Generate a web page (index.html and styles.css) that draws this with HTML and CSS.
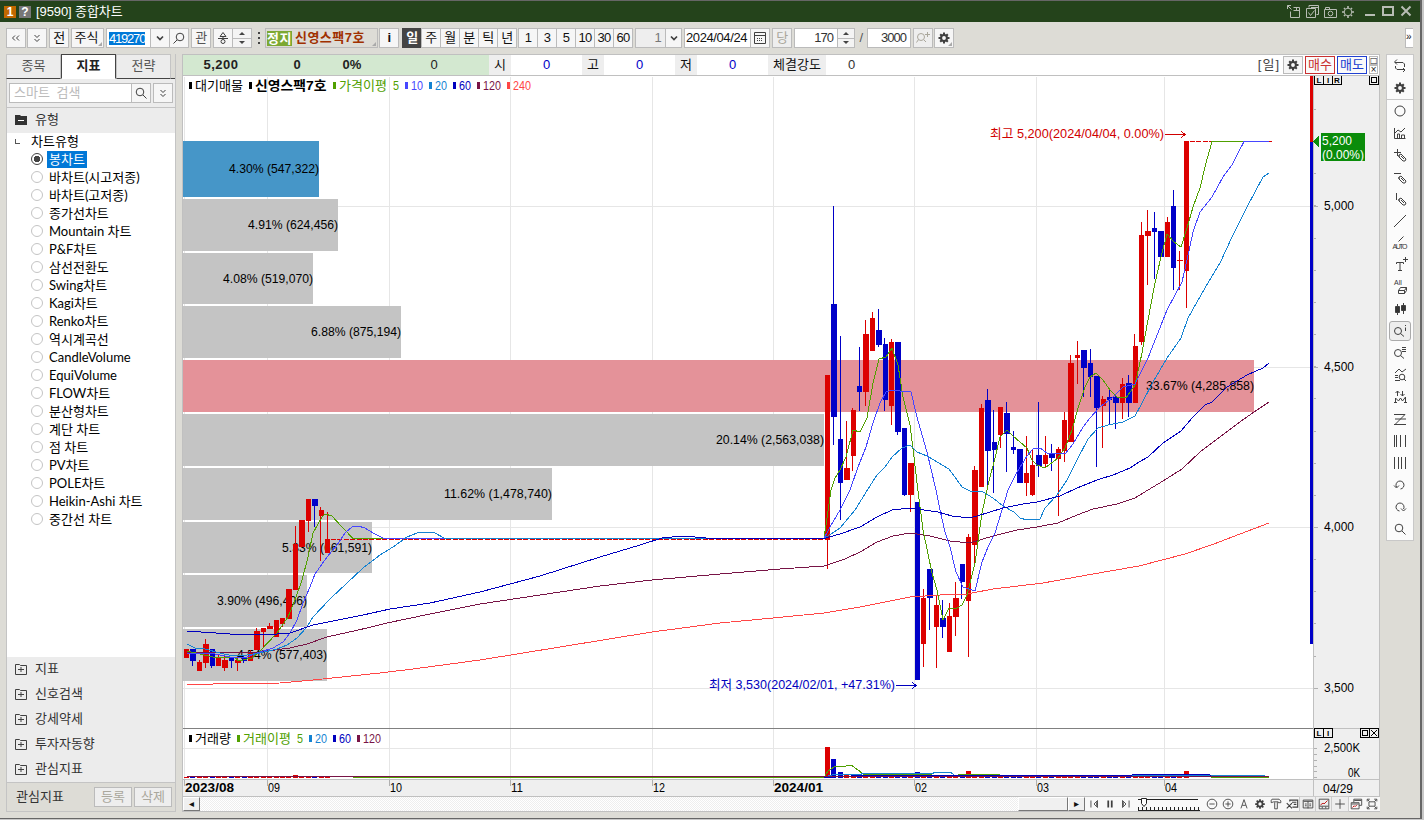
FILE: index.html
```html
<!DOCTYPE html>
<html lang="ko">
<head>
  <meta charset="utf-8">
  <title>[9590] 종합차트</title>
  <link rel="stylesheet" href="styles.css">
</head>
<body>

<!-- shared icons -->
<svg class="defs" width="0" height="0">
  <symbol id="gear" viewBox="0 0 16 16">
    <path d="M8 2.500v11M2.500 8h11M4.200 4.200l7.600 7.600M11.800 4.200l-7.600 7.600" stroke="currentColor" stroke-width="2"/>
    <circle cx="8" cy="8" r="2.900" fill="#f8f8f8" stroke="currentColor" stroke-width="2"/>
  </symbol>
  <symbol id="glass" viewBox="0 0 16 16">
    <circle cx="7" cy="7" r="3.800"/><path d="M10 10l3.500 3.500"/>
  </symbol>
  <symbol id="pencil" viewBox="0 0 16 16">
    <path d="M7 8l2-1 5 5-1 2-2 0-4-4zM7 8l0 2M9 9l3 3"/>
  </symbol>
  <symbol id="down" viewBox="0 0 16 16"><path d="M5 6.500l3 3 3-3" stroke-width="1.700"/></symbol>
  <symbol id="chevs" viewBox="0 0 16 16"><path d="M5.500 5l2.500 2.500 2.500-2.500M5.500 9l2.500 2.500 2.500-2.500"/></symbol>
  <symbol id="plusbox" viewBox="0 0 16 16">
    <path d="M2.500 3.500h4l1 1h6v9h-11zM5 8.500h6M8 6v5"/>
  </symbol>
</svg>

<div class="window">
  <div class="titlebar">
    <span class="badge num">1</span>
    <span class="badge help">?</span>
    <span class="caption">[9590] 종합차트</span>
    <div class="winbtns">
      <svg class="ic" viewBox="0 0 16 16"><path d="M1.500 5v-3.500h3.500M1.500 1.500l4 4M4.500 7.500v6h9v-10h-6M7.500 6.500h6M10.500 4v2"/></svg>
      <svg class="ic" viewBox="0 0 16 16"><path d="M5 3.500v-2h9.500v9h-2M2.500 4.500h9v9h-9zM4.500 8.500l2 3 4-5M7 3.500h7" /></svg>
      <svg class="ic" viewBox="0 0 16 16"><path d="M2.500 5.500h12v8h-12zM3.500 5.500v-2h4v2"/><circle cx="8.500" cy="9.500" r="2.300"/></svg>
      <svg class="ic" viewBox="0 0 16 16"><circle cx="8" cy="8" r="3.800"/><path d="M8 2v2M8 12v2M2 8h2M12 8h2M4 4l1 1M11 11l1 1M12 4l-1 1M4 12l1-1" stroke-width="1.600"/></svg>
      <svg class="ic wide" viewBox="0 0 16 16"><path d="M3 11h10" stroke-width="2"/></svg>
      <svg class="ic" viewBox="0 0 16 16"><path d="M3 3h10v8h-10z" stroke-width="2"/></svg>
      <svg class="ic" viewBox="0 0 16 16"><path d="M3.500 2.500l9 9M12.500 2.500l-9 9" stroke-width="2"/></svg>
    </div>
  </div>

  <div class="toolbar">
    <div class="btn w20"><svg class="ic turn"><use href="#chevs"/></svg></div>
    <div class="btn w20 g1"><svg class="ic"><use href="#chevs"/></svg></div>
    <div class="btn w20 g2">전</div>
    <div class="btn corner w33 g2">주식</div>
    <div class="field code g2"><span class="sel">419270</span></div>
    <div class="btn w20 join"><svg class="ic"><use href="#down"/></svg></div>
    <div class="btn w20 join"><svg class="ic flip"><use href="#glass"/></svg></div>
    <div class="btn w20 g2 soft">관</div>
    <div class="btn w20 g2 soft"><svg class="ic" viewBox="0 0 16 16"><path d="M8 2.500l-3 4h6zM3 8.500h10M8 6v2"/><circle cx="8" cy="11.500" r="2"/></svg></div>
    <div class="spin w19"><i class="up"></i><i class="dn"></i></div>
    <div class="dots"><i></i><i></i><i></i></div>
    <div class="btn corner stock"><span class="halt">정지</span><b>신영스팩7호</b></div>
    <div class="btn w20 g1"><b>i</b></div>
    <div class="btn w20 g3 on">일</div>
    <div class="btn w20 join">주</div>
    <div class="btn w20 join">월</div>
    <div class="btn w20 join">분</div>
    <div class="btn w20 join">틱</div>
    <div class="btn w20 join">년</div>
    <div class="btn w20 g1">1</div>
    <div class="btn w20 join">3</div>
    <div class="btn w20 join">5</div>
    <div class="btn w20 join">10</div>
    <div class="btn w20 join">30</div>
    <div class="btn w20 join">60</div>
    <div class="field off g2">1</div>
    <div class="btn w17 join"><svg class="ic"><use href="#down"/></svg></div>
    <div class="field date g2">2024/04/24</div>
    <div class="btn w20 join"><svg class="ic" viewBox="0 0 16 16"><path d="M2.500 2.500h11v11h-11zM3 5.500h10"/><path d="M5 8.500h6M5 10.500h6" stroke-dasharray="1 1"/></svg></div>
    <div class="btn w20 g2 dim">당</div>
    <div class="field count g2">170</div>
    <div class="spin w17"><i class="up"></i><i class="dn"></i></div>
    <div class="slash">/</div>
    <div class="field count">3000</div>
    <div class="btn w20 g2 dim"><svg class="ic" viewBox="0 0 16 16"><circle cx="6" cy="7" r="3.500"/><path d="M3.500 9.500l-2 3M10 4.500h5M12.500 2v5M9 10l2 2"/></svg></div>
    <div class="btn corner w20 g1"><svg class="ic"><use href="#gear"/></svg></div>
    <div class="more">»</div>
  </div>

  <div class="main">
    <div class="sidebar">
      <div class="tabs">
        <div class="tab">종목</div>
        <div class="tab active">지표</div>
        <div class="tab">전략</div>
        <div class="rest"></div>
      </div>
      <div class="search">
        <div class="query">스마트 검색</div>
        <div class="btn w20 join"><svg class="ic"><use href="#glass"/></svg></div>
        <div class="btn w20 g2"><svg class="ic"><use href="#chevs"/></svg></div>
      </div>
      <div class="group head">
        <svg class="ic" viewBox="0 0 16 16"><path d="M2 3h5l1 1h6v9h-12z" fill="#333" stroke="none"/><path d="M5 8.500h6" stroke="#fff"/></svg>
        유형
      </div>
      <div class="tree">
        <div class="root"><i></i>차트유형</div>
        <div class="item checked"><i></i><span>봉차트</span></div>
        <div class="item"><i></i><span>바차트(시고저종)</span></div>
        <div class="item"><i></i><span>바차트(고저종)</span></div>
        <div class="item"><i></i><span>종가선차트</span></div>
        <div class="item"><i></i><span>Mountain 차트</span></div>
        <div class="item"><i></i><span>P&amp;F차트</span></div>
        <div class="item"><i></i><span>삼선전환도</span></div>
        <div class="item"><i></i><span>Swing차트</span></div>
        <div class="item"><i></i><span>Kagi차트</span></div>
        <div class="item"><i></i><span>Renko차트</span></div>
        <div class="item"><i></i><span>역시계곡선</span></div>
        <div class="item"><i></i><span>CandleVolume</span></div>
        <div class="item"><i></i><span>EquiVolume</span></div>
        <div class="item"><i></i><span>FLOW차트</span></div>
        <div class="item"><i></i><span>분산형차트</span></div>
        <div class="item"><i></i><span>계단 차트</span></div>
        <div class="item"><i></i><span>점 차트</span></div>
        <div class="item"><i></i><span>PV차트</span></div>
        <div class="item"><i></i><span>POLE차트</span></div>
        <div class="item"><i></i><span>Heikin-Ashi 차트</span></div>
        <div class="item"><i></i><span>중간선 차트</span></div>
      </div>
      <div class="group"><svg class="ic"><use href="#plusbox"/></svg>지표</div>
      <div class="group"><svg class="ic"><use href="#plusbox"/></svg>신호검색</div>
      <div class="group"><svg class="ic"><use href="#plusbox"/></svg>강세약세</div>
      <div class="group"><svg class="ic"><use href="#plusbox"/></svg>투자자동향</div>
      <div class="group"><svg class="ic"><use href="#plusbox"/></svg>관심지표</div>
      <div class="foot">
        <span>관심지표</span>
        <div class="btn dim">등록</div>
        <div class="btn dim">삭제</div>
      </div>
    </div>

    <div class="chart">
      <div class="quote">
        <div class="now"><b>5,200</b><b>0</b><b>0%</b><span>0</span></div>
        <div class="lab">시</div><div class="val">0</div>
        <div class="lab">고</div><div class="val">0</div>
        <div class="lab">저</div><div class="val">0</div>
        <div class="lab power">체결강도</div><div class="val last">0</div>
        <div class="right">
          <span class="period">[일]</span>
          <div class="btn w20"><svg class="ic"><use href="#gear"/></svg></div>
          <div class="trade buy">매수</div>
          <div class="trade sell">매도</div>
          <div class="mini"><i>□</i><i>×</i></div>
        </div>
      </div>
      <svg id="plot" width="1197" height="721" viewBox="183 76 1197 721"></svg>
      <div class="scroll">
        <div class="sbtn">◂</div>
        <div class="track"></div>
        <div class="thumb"></div>
        <div class="sbtn">▸</div>
        <div class="tools">
          <svg class="ic" viewBox="0 0 16 16"><path d="M4.500 4v8M12 4l-4 4 4 4zM11 6v4" /></svg>
          <svg class="ic" viewBox="0 0 16 16"><path d="M6 4v8M10 4v8" stroke-width="2"/></svg>
          <svg class="ic" viewBox="0 0 16 16"><path d="M11.500 4v8M4 4l4 4-4 4zM5 6v4"/></svg>
          <svg class="slider" width="66" height="14" viewBox="0 0 66 14"><path d="M2 2.500h60"/><path d="M2 12h62" stroke-dasharray="1 3" stroke-width="4"/><path d="M2 13.500h62"/><path d="M5.500 1.500h5v5l-2.500 3-2.500-3z" fill="#fff"/></svg>
          <svg class="ic" viewBox="0 0 16 16"><circle cx="8" cy="8" r="5.500"/><path d="M5 8h6"/></svg>
          <svg class="ic" viewBox="0 0 16 16"><circle cx="8" cy="8" r="5.500"/><path d="M5 8h6M8 5v6"/></svg>
          <svg class="ic" viewBox="0 0 16 16"><path d="M4.500 13l3.500-10 3.500 10M6 9.500h4"/></svg>
          <svg class="ic" viewBox="0 0 16 16"><use href="#gear"/></svg>
          <svg class="ic" viewBox="0 0 16 16"><path d="M3.500 2.500h8l2 2v2h-3v-1h-5l-3 1v-3zM6.500 6v7.500h3v-7.500"/></svg>
          <svg class="ic" viewBox="0 0 16 16"><path d="M5.500 5v-1.500h9v8h-6M8 6h5M10 8.500h3M2 7l6 6M8 7l-6 6" stroke-width="1.300"/></svg>
          <svg class="ic boxed" viewBox="0 0 16 16"><path d="M2.500 3.500h11v9h-11zM3 5h10M8 5v8M4.500 8h2M4.500 10h2M9.500 8h2M9.500 10h2"/></svg>
          <svg class="ic boxed" viewBox="0 0 16 16"><path d="M2.500 2.500h11v11h-11zM3 10.500h10M6 11v2M10 11v2"/><path d="M4 9l3-2 1 1 4-4" stroke="#b00"/></svg>
          <svg class="ic boxed" viewBox="0 0 16 16"><path d="M8 2.500v11M2.500 8h11"/></svg>
          <svg class="ic" viewBox="0 0 16 16"><path d="M5.500 6v-3.500h9v7h-3M2.500 6.500h9v7h-9zM3 8h8M6 4h8"/><path d="M4 12l2-2 1 1 2-2" stroke="#b00"/></svg>
          <svg class="ic" viewBox="0 0 16 16"><path d="M4.500 5.500h7v5h-7zM2.500 5v-2.500h3M10.500 2.500h3v2.500M13.500 11v2.500h-3M5.500 13.500h-3v-2.500M3 3l2 2M13 3l-2 2M3 13l2-2M13 13l-2-2"/></svg>
        </div>
      </div>
    </div>

    <div class="rail">
      <svg class="ic" viewBox="0 0 16 16"><path d="M5 1.500l-2.500 2.500 2.500 2.500M3 4.500h8l1.500 1.500v3M11 14l2-2-2-2M13 11.500h-8l-1.500-1.500v-2"/></svg>
      <svg class="ic" viewBox="0 0 16 16"><use href="#gear"/></svg>
      <hr>
      <svg class="ic" viewBox="0 0 16 16"><circle cx="8" cy="8" r="5"/></svg>
      <svg class="ic" viewBox="0 0 16 16"><path d="M2.500 3v10.500h11M3 8l3-3 3 2 4-4M5.500 13v-4h2v4M9.500 13v-3h3v3"/></svg>
      <svg class="ic" viewBox="0 0 16 16"><path d="M2 5.500h7M5.500 2v7"/><use href="#pencil"/></svg>
      <svg class="ic" viewBox="0 0 16 16"><path d="M2 4.500h7"/><use href="#pencil"/></svg>
      <svg class="ic" viewBox="0 0 16 16"><path d="M4.500 2v7"/><use href="#pencil"/></svg>
      <svg class="ic" viewBox="0 0 16 16"><path d="M2 14l12-12"/></svg>
      <svg class="ic" viewBox="0 0 16 16"><path d="M6.500 6.500l5-5"/><text x="8" y="14" textLength="15">AUTO</text></svg>
      <svg class="ic" viewBox="0 0 16 16"><path d="M4.500 7v-1.500h7v1.500M8 6v7.500M6 13.500h4M11 2.500h5M13.500 0v5"/></svg>
      <svg class="ic" viewBox="0 0 16 16"><text x="6" y="6">All</text><path d="M6.500 11.500l2-3h6v3l-2 3h-6zM6.500 11.500h6v3M12.500 11.500l2-3"/></svg>
      <svg class="ic" viewBox="0 0 16 16"><path d="M5.500 3v11M11.500 2v11"/><path d="M3.500 5.500h4v6h-4zM9.500 4.500h4v5h-4z" fill="#333"/></svg>
      <div class="picked"><svg class="ic" viewBox="0 0 16 16"><circle cx="6" cy="8" r="3.500"/><path d="M8.500 10.500l3.500 3M13.500 2v1M13.500 4.500v3.500"/></svg></div>
      <svg class="ic" viewBox="0 0 16 16"><circle cx="6" cy="8" r="3.500"/><path d="M8.500 10.500l3.500 3M10 2.500h4M10 4.500h4M10 6.500h4"/></svg>
      <svg class="ic" viewBox="0 0 16 16"><path d="M3 6l4-4 3 3 4-3M3 8.500h3M3 10.500h3M3 13.500h5M12 12l2 2"/><circle cx="10" cy="10" r="2.800"/></svg>
      <svg class="ic" viewBox="0 0 16 16"><path d="M3.500 13v-4l3 3 2-3 2 3 3-4v5M5.500 7v-5M3.500 4l2-2 2 2M10.500 2v5M8.500 5l2 2 2-2M2 13.500h3M12 13.500h3"/></svg>
      <svg class="ic" viewBox="0 0 16 16"><path d="M2 3.500h11M3 8h11M2 13.500h12M13 3.500l-10 10"/></svg>
      <svg class="ic" viewBox="0 0 16 16"><path d="M2.500 2v12M4.500 2v12M8.500 2v12M13.500 2v12"/></svg>
      <svg class="ic" viewBox="0 0 16 16"><path d="M2.500 2v12M6.500 2v12M9.500 2v12M13.500 2v12"/></svg>
      <svg class="ic" viewBox="0 0 16 16"><path d="M4.500 10a4 4 0 1 1 4 2M2 8.500l2.500 2.500 2.500-2.500"/></svg>
      <svg class="ic" viewBox="0 0 16 16"><path d="M11.500 10a4 4 0 1 0-4 2M9 9.500l2.500 2.500 2.500-2.500"/></svg>
      <svg class="ic" viewBox="0 0 16 16"><use href="#glass"/></svg>
    </div>
  </div>
</div>

<script src="chart.js"></script>
</body>
</html>
```
FILE: styles.css
```css
* { box-sizing: border-box; }

body {
    margin: 0;
    width: 1424px;
    height: 820px;
    overflow: hidden;
    background: #c8c8c8;
    color: #111;
    font: 13px "Liberation Sans", "Noto Sans CJK KR", sans-serif;
    line-height: 16px;
    white-space: nowrap;
}

.defs { display: block; }

.window {
    width: 1422px;
    height: 819px;
    background: #dddcd6;
    border-top: 1px solid #666;
    border-right: 2px solid #666;
    border-bottom: 1px solid #666;
    display: flex;
    flex-direction: column;
}

.ic {
    width: 16px;
    height: 16px;
    fill: none;
    stroke: #404040;
    color: #404040;
    flex: none;
}
.ic text {
    font-size: 7px;
    font-weight: normal;
    fill: #333;
    stroke: none;
    text-anchor: middle;
}
.flip { transform: scaleX(-1); }
.turn { transform: rotate(90deg); }

/* title bar */
.titlebar {
    height: 21px;
    flex: none;
    background: #24431b;
    color: #fff;
    display: flex;
    align-items: center;
    padding-left: 4px;
}
.badge {
    width: 12px;
    height: 12px;
    margin-right: 3px;
    line-height: 12px;
    font-size: 12px;
    font-weight: bold;
    text-align: center;
}
.num { background: #c06800; }
.help { background: #777; }
.caption { margin-left: 2px; letter-spacing: -0.1px; }
.winbtns {
    margin-left: auto;
    display: flex;
    gap: 2px;
    padding-right: 6px;
}
.winbtns .ic { stroke: #b8bdb5; }
.winbtns .wide { margin-left: 4px; }

/* toolbar */
.toolbar {
    height: 32px;
    flex: none;
    display: flex;
    align-items: center;
    padding: 0 0 0 6px;
    letter-spacing: -0.7px;
}
.btn {
    height: 20px;
    border: 1px solid #bbb;
    background: #f6f6f6;
    display: flex;
    align-items: center;
    justify-content: center;
    position: relative;
    flex: none;
}
.w17 { width: 17px; }
.w19 { width: 19px; }
.w20 { width: 20px; }
.w33 { width: 33px; letter-spacing: 0; padding-right: 2px; }
.join { margin-left: -1px; }
.g1 { margin-left: 1px; }
.g2 { margin-left: 2px; }
.g3 { margin-left: 3px; }
.soft { color: #555; }
.dim, .dim .ic { color: #aaa79c; stroke: #aaa79c; }
.dim { background: #eee; }
.on { background: #444; color: #fff; border-color: #444; font-weight: bold; }
.corner::after {
    content: "";
    position: absolute;
    right: 1px;
    bottom: 1px;
    border: 2px solid #aaa;
    border-top-color: transparent;
    border-left-color: transparent;
}
.field {
    height: 20px;
    border: 1px solid #bbb;
    background: #fff;
    display: flex;
    align-items: center;
    flex: none;
}
.code { width: 45px; padding-left: 2px; }
.sel { background: #0078d7; color: #fff; letter-spacing: -1.2px; line-height: 13px; }
.off { width: 31px; background: #eee; color: #777; justify-content: flex-end; padding-right: 4px; }
.date { width: 67px; padding-left: 1px; letter-spacing: -0.4px; }
.count { width: 44px; justify-content: flex-end; padding-right: 4px; color: #333; letter-spacing: -1px; }
.spin {
    height: 20px;
    border: 1px solid #bbb;
    border-left: 0;
    background: linear-gradient(#f4f4f4 9px, #bbb 9px, #bbb 10px, #f4f4f4 10px);
    display: flex;
    flex-direction: column;
    align-items: center;
    justify-content: space-between;
    padding: 3px 0;
}
.up { border: 3px solid transparent; border-top: 0; border-bottom: 3px solid #444; }
.dn { border: 3px solid transparent; border-bottom: 0; border-top: 3px solid #444; }
.dots { width: 13px; display: flex; flex-direction: column; align-items: center; gap: 3px; }
.dots i { width: 2px; height: 2px; background: #444; }
.stock {
    width: 113px;
    background: #dddcd6;
    color: #a03000;
    justify-content: flex-start;
    padding-left: 1px;
    letter-spacing: 0.5px;
}
.halt { background: #7ca832; color: #fff; font-weight: bold; margin-right: 3px; line-height: 15px; }
.slash { width: 12px; text-align: center; color: #555; }
.more {
    margin-left: auto;
    margin-right: 7px;
    width: 8px;
    height: 20px;
    border: 1px solid #bbb;
    border-right: 0;
    background: #fff;
    font-size: 10px;
}

/* body */
.main {
    flex: 1;
    min-height: 0;
    display: flex;
    align-items: flex-start;
    padding: 0 6px;
}
.sidebar {
    width: 170px;
    height: 758px;
    border: 1px solid #c4c4c4;
    border-top: 0;
    background: #ececec;
    display: flex;
    flex-direction: column;
    color: #333;
}
.tabs { height: 25px; display: flex; flex: none; margin-left: -1px; }
.tab {
    width: 55px;
    border: 1px solid #c4c4c4;
    border-bottom: 1px solid #444;
    text-align: center;
    line-height: 22px;
    color: #555;
}
.tab.active {
    background: #fff;
    border-color: #444;
    border-bottom-color: #fff;
    color: #222;
    font-weight: bold;
}
.rest { flex: 1; border-bottom: 1px solid #444; background: #dddcd6; }
.search { height: 29px; display: flex; align-items: center; padding-left: 2px; border-bottom: 1px solid #c4c4c4; flex: none; }
.query {
    width: 123px;
    height: 20px;
    border: 1px solid #bbb;
    background: #fff;
    color: #bbb;
    padding-left: 4px;
    line-height: 18px;
    word-spacing: 3px;
}
.group { height: 25px; flex: none; display: flex; align-items: center; padding: 0 0 1px 6px; gap: 6px; }
.tree {
    flex: 1;
    background: #fff;
    color: #000;
    font-family: Lato, "Noto Sans CJK KR", sans-serif;
    font-size: 13px;
}
.root { height: 18px; margin-top: -1px; display: flex; align-items: center; padding-left: 8px; }
.root i { width: 5px; height: 5px; border: solid #555; border-width: 0 0 1px 1px; margin-right: 11px; }
.item { height: 18px; display: flex; align-items: center; padding-left: 24px; }
.item i { width: 12px; height: 12px; border: 1px solid #c4c4c4; border-radius: 50%; margin-right: 4px; }
.item span { padding: 0 2px; line-height: 17px; }
.checked i { border-color: #444; background: radial-gradient(#444 3px, #fff 3.500px); }
.checked span { background: #0078d7; color: #fff; }
.foot {
    height: 29px;
    flex: none;
    background: #dddcd6;
    border-top: 1px solid #c4c4c4;
    display: flex;
    align-items: center;
    padding: 0 3px 0 9px;
    gap: 2px;
}
.foot span { margin-right: auto; }
.foot .btn { width: 38px; }

/* chart panel */
.chart {
    width: 1198px;
    height: 758px;
    margin-left: 6px;
    border: 1px solid #c0c0c0;
    border-right: 0;
    background: #fff;
    display: flex;
    flex-direction: column;
}
.quote { height: 21px; flex: none; display: flex; border-bottom: 1px solid #c0c0c0; border-right: 1px solid #c0c0c0; text-align: center; line-height: 20px; }
.now { width: 306px; background: #d3e8d0; display: grid; grid-template-columns: 76px 76px 34px 1fr; color: #222; }
.now b:first-child { letter-spacing: 0.5px; }
.now span { padding-left: 10px; }
.lab { width: 22px; background: #eee; }
.power { width: 58px; }
.val { width: 71px; color: #0000c8; }
.last { width: 51px; color: #333; }
.right { margin-left: auto; display: flex; align-items: center; gap: 2px; padding-right: 1px; }
.period { color: #444; letter-spacing: 1px; margin-right: 1px; }
.right .btn { height: 18px; }
.trade { width: 30px; height: 18px; line-height: 16px; border: 1px solid; background: #fafafa; }
.buy { color: #c83030; }
.sell { color: #2040d0; }
.mini i { display: block; width: 9px; height: 9px; border: 1px solid #bbb; font: 8px/7px "DejaVu Sans"; }
#plot { display: block; flex: none; }

.scroll { height: 14px; display: flex; background: #f8f8f8; flex: none; }
.track {
    width: 818px;
    background: repeating-conic-gradient(#eee 0 25%, #fff 0 50%) 0 0 / 2px 2px;
}
.sbtn, .thumb {
    width: 17px;
    height: 14px;
    background: #f0f0f0;
    border: 1px solid #fff;
    border-right-color: #777;
    border-bottom-color: #777;
    font: 10px/11px "DejaVu Sans";
    text-align: center;
}
.thumb { width: 50px; }
.tools { display: flex; align-items: center; padding-left: 1px; }
.tools .ic { height: 14px; }
.slider { fill: none; stroke: #222; margin: 0 2px; }
.boxed { background: #eee; outline: 1px solid #ccc; }

/* drawing tools */
.rail {
    width: 28px;
    height: 487px;
    margin-left: 6px;
    border: 1px solid #c8c8c8;
    background: #fbfbfb;
    display: flex;
    flex-direction: column;
    align-items: center;
    padding-top: 3px;
    gap: 6px;
}
.rail hr { width: 26px; margin: -3px 0 -3px; border: 0; border-top: 1px solid #c8c8c8; }
.picked {
    width: 22px;
    height: 20px;
    margin: -2px 0;
    border: 1px solid #aaa;
    border-radius: 3px;
    background: #eee;
    display: flex;
    align-items: center;
    justify-content: center;
    flex: none;
}

/* plot */
#plot * { shape-rendering: crispEdges; }
#plot polyline, #plot .stroke { fill: none; stroke-width: 1; }
#plot text { font: 13px "Liberation Sans", "Noto Sans CJK KR", sans-serif; }
#plot .bold { font-weight: bold; }
#plot .mark { font-size: 8px; font-weight: bold; }
```
FILE: chart.js
```js
const plot = document.getElementById('plot');

const RED = '#dc0000';
const BLUE = '#0000c8';
const GREEN = '#50a000';
const MA10 = '#4646ff';
const MA20 = '#1482d2';
const MA60 = '#0000be';
const MA120 = '#781446';
const MA240 = '#ff4646';

function add(tag, attrs, text) {
    const el = document.createElementNS('http://www.w3.org/2000/svg', tag);
    for (const key in attrs) el.setAttribute(key, attrs[key]);
    if (text) el.textContent = text;
    plot.appendChild(el);
    return el;
}

function rect(x, y, w, h, fill) {
    add('rect', { x: x, y: y, width: w, height: h, fill: fill });
}

function line(points, color) {
    add('polyline', { points: points, stroke: color });
}

// fixed pitch: latin takes a half cell, hangul a whole one
function textWidth(str, cell) {
    let w = 0;
    for (const c of str) w += c > '\u1000' ? cell * 2 : cell;
    return w;
}

function label(x, cy, str, color, bold) {
    const w = textWidth(str, bold ? (/[가-힣]/.test(str) ? 6.5 : 7) : 6);
    add('text', {
        x: x, y: cy + 4.5, fill: color || '#000', class: bold ? 'bold' : '',
        textLength: w, lengthAdjust: 'spacingAndGlyphs'
    }, str);
}

// grid and axis backgrounds
rect(1313, 76, 67, 720, '#efefef');
rect(183, 779, 1197, 18, '#efefef');
const months = [[184, '2023/08', true], [267, '09'], [389, '10'], [510, '11'], [652, '12'],
    [773, '2024/01', true], [914, '02'], [1036, '03'], [1164, '04']];
months.forEach(function (m) {
    rect(m[0], 77, 1, 702, '#e6e6e6');
});
[206, 367, 527, 688, 748].forEach(function (y) {
    rect(183, y, 1130, 1, '#e6e6e6');
});

// volume by price: top, height, right edge, text, color
const profile = [
    [141, 56, 319, '4.30% (547,322)', '#4696c8'],
    [199, 52, 338, '4.91% (624,456)'],
    [253, 51, 313, '4.08% (519,070)'],
    [306, 52, 401, '6.88% (875,194)'],
    [360, 52, 1254, '33.67% (4,285,858)', '#e49299'],
    [414, 52, 824, '20.14% (2,563,038)'],
    [468, 52, 552, '11.62% (1,478,740)'],
    [522, 51, 372, '5.33% (661,591)'],
    [575, 52, 307, '3.90% (496,406)'],
    [629, 52, 327, '4.54% (577,403)']
];
profile.forEach(function (p) {
    rect(183, p[0], p[2] - 183, p[1], p[4] || '#c4c4c4');
    label(p[2] - textWidth(p[3], 6), p[0] + p[1] / 2 - 0.5, p[3]);
});

// candles: high, body top, body bottom, low, 1 = up / 0 = down
const early = [
    [649, 649, 658, 658, 1], [649, 649, 661, 666, 0], [660, 662, 671, 671, 1], [639, 644, 663, 668, 1],
    [649, 649, 666, 668, 0], [655, 658, 666, 666, 1], [656, 660, 668, 671, 1], [657, 658, 661, 668, 0],
    [657, 660, 663, 671, 1], [656, 658, 661, 663, 0], [650, 652, 661, 661, 1], [628, 631, 650, 650, 1],
    [628, 628, 632, 647, 1], [623, 626, 629, 629, 1], [620, 620, 637, 637, 1], [618, 618, 624, 627, 1],
    [589, 589, 619, 619, 1], [526, 544, 590, 590, 1], [520, 520, 547, 547, 1], [499, 499, 521, 532, 1],
    [499, 499, 506, 527, 0], [507, 510, 516, 561, 1], [512, 539, 553, 553, 1]
];
const late = [
    [375, 375, 540, 569, 1], [206, 304, 417, 445, 0], [336, 439, 483, 520, 0], [421, 468, 480, 480, 1],
    [408, 410, 456, 471, 1], [347, 386, 392, 411, 0], [320, 334, 392, 406, 1], [312, 318, 351, 351, 1],
    [309, 330, 345, 347, 0], [338, 344, 400, 411, 0], [339, 342, 406, 425, 1], [342, 342, 432, 435, 0],
    [428, 428, 495, 496, 0], [463, 463, 495, 512, 1], [502, 502, 680, 680, 0], [589, 598, 644, 667, 1],
    [569, 569, 598, 630, 0], [595, 605, 627, 668, 1], [600, 618, 627, 638, 0], [603, 616, 652, 652, 1],
    [582, 598, 617, 636, 1], [564, 564, 582, 599, 0], [534, 537, 601, 657, 1], [466, 470, 545, 565, 1],
    [404, 408, 487, 487, 1], [389, 400, 451, 487, 0], [410, 442, 450, 493, 0], [407, 407, 435, 448, 1],
    [402, 413, 434, 472, 0], [431, 447, 450, 454, 0], [449, 449, 483, 483, 0], [436, 473, 483, 496, 1],
    [450, 465, 495, 496, 1], [402, 455, 466, 477, 0], [436, 455, 464, 467, 1], [444, 454, 458, 471, 0],
    [447, 449, 459, 516, 1], [412, 420, 451, 462, 1], [355, 363, 442, 442, 1], [341, 355, 358, 384, 1],
    [350, 350, 368, 397, 0], [349, 363, 377, 397, 0], [376, 376, 408, 467, 0], [396, 399, 406, 448, 1],
    [390, 397, 400, 425, 0], [394, 397, 403, 429, 0], [378, 384, 403, 419, 1], [375, 383, 403, 417, 0],
    [334, 346, 403, 403, 1], [222, 235, 342, 345, 1], [210, 231, 236, 285, 1], [212, 228, 232, 279, 0],
    [231, 231, 257, 257, 0], [217, 222, 257, 257, 1], [190, 206, 268, 290, 0], [251, 260, 261, 290, 1],
    [141, 141, 271, 308, 1]
];

function barX(i) {
    return 186.3 + 6.41 * i;
}

function candle(c, i) {
    const x = barX(i);
    const left = Math.round(x - 2.4);
    const right = Math.round(x + 3);
    const color = c[4] ? RED : BLUE;
    rect(Math.floor(x), c[0], 1, c[3] - c[0], color);
    rect(left, c[1], right - left, c[2] - c[1], color);
}
early.forEach(function (c, i) { candle(c, i); });
late.forEach(function (c, i) { candle(c, i + 100); });

// sessions without trading
for (let x = 331; x < 825; x += 6.41) rect(Math.round(x), 539, 5, 1, RED);
for (let x = 1190; x < 1270; x += 6.41) rect(Math.round(x), 141, 5, 1, RED);

// moving averages
line('187,685 213,684 280,683 313,680 380,673 413,669 480,660 560,647 652,632 720,623 773,618 824,613 860,607 910,597 940,595 967,594 993,589 1043,583 1093,574 1139,566 1185,554 1214,544 1240,534 1269,523', MA240);
line('187,652 213,653 260,652 290,648 307,644 327,637 367,628 387,623 430,614 480,604 520,598 600,586 652,580 720,574 780,569 824,566 845,559 860,552 877,542 893,536 910,533 930,536 950,541 970,543 993,536 1017,530 1037,527 1058,523 1077,515 1093,509 1117,504 1135,498 1148,490 1163,481 1182,469 1200,452 1220,437 1237,424 1254,412 1269,402', MA120);
line('187,651 200,654 213,657 235,657 238,661 252,658 260,651 277,633 288,617 295,600 302,580 308,557 313,533 322,517 325,514 332,516 342,527 353,538.5 824,538.5 831,490 835,478 840,470 846,457 853,430 860,432 867,418 873,383 879,359 886,357 892,348 898,365 903,397 910,425 914,457 917,483 923,530 932,573 937,590 943,620 949,608 957,608 962,605 967,595 975,563 982,513 988,485 995,458 1000,437 1007,430 1013,436 1027,448 1032,460 1037,465 1045,468 1058,458 1065,448 1072,430 1078,408 1085,387 1090,377 1096,373 1103,380 1110,390 1117,397 1126,398 1135,385 1142,353 1148,320 1155,283 1161,257 1167,234 1174,242 1181,247 1187,228 1193,207 1200,188 1206,163 1212,141.5 1244,141.5', GREEN);
line('187,653 200,654 210,653 230,657 247,657 260,652 273,648 283,642 290,633 297,620 303,603 310,587 315,574 327,557 337,545 345,533 352,527 358,526 365,528 373,533 384,538.5 824,538.5 830,527 840,510 850,490 858,467 866,447 873,423 880,403 886,392 892,390 900,391 911,392 917,417 927,452 936,490 940,510 945,532 950,547 956,572 963,587 975,591 982,562 988,547 995,533 1002,510 1008,490 1017,472 1027,456 1033,449 1040,448 1047,453 1065,454 1073,444 1083,427 1090,418 1100,407 1112,398 1123,387 1135,384 1148,358 1167,310 1182,282 1187,260 1193,232 1200,212 1212,197 1223,177 1232,165 1244,141.5 1269,141.5', MA10);
line('187,644 195,648 205,649 220,653 233,656 247,655 260,653 277,649 287,645 297,638 307,627 313,617 330,599 347,583 363,568 380,555 393,547 407,537 417,533 425,532 435,533 445,538.5 824,538.5 840,528 855,510 868,489 877,475 885,467 892,457 902,448 910,445 917,452 927,456 949,469 957,480 962,487 970,491 983,492 993,498 1003,506 1014,512 1020,518 1027,520 1040,519 1045,508 1057,495 1067,480 1077,460 1088,439 1098,428 1108,425 1123,422 1135,416 1142,403 1153,382 1167,358 1181,338 1188,318 1205,288 1220,263 1232,237 1247,207 1263,177 1269,173', MA20);
line('187,631 230,634 277,634 290,633 313,625 363,615 390,609 430,603 480,592 540,576 600,557 640,545 662,538 682,536 695,537 712,538.5 824,538.5 840,534 860,527 877,517 892,510 910,508 938,512 952,516 970,518 987,513 1003,508 1023,504 1037,502 1060,496 1077,488 1097,480 1113,475 1130,468 1139,462 1148,457 1163,443 1181,431 1193,417 1205,405 1212,402 1227,387 1247,375 1263,368 1269,363', MA60);

// high and low marks
label(990, 133, '최고 5,200(2024/04/04, 0.00%)', '#d00000');
add('path', { class: 'stroke', d: 'M1165 134.5h20M1181 131l4 3.5-4 3.5', stroke: '#d00000' });
label(709, 684.5, '최저 3,530(2024/02/01, +47.31%)', '#0000be');
add('path', { class: 'stroke', d: 'M896 685.5h20M912 682l4 3.5-4 3.5', stroke: '#0000be' });

// volume pane
for (let i = 0; i < 157; i++) {
    if (i > 22 && i < 100) continue;
    const c = i < 23 ? early[i] : late[i - 100];
    let h = i < 100 ? 1 : 3;
    if (i === 17) h = 3;
    if (i === 100) h = 31;
    if (i === 101) h = 19;
    if (i === 102) h = 6;
    if (i === 114) h = 6;
    if (i === 122 || i === 156) h = 7;
    rect(Math.round(barX(i) - 2.4), 778 - h, 5, h, c[4] ? RED : BLUE);
}
line('353,777.5 824,777.5 828,771 834,767 852,765.500 858,770 864,774.500 930,774.500 935,776 970,774.500 998,774.500 1005,776.500 1209,776.500 1214,777.500 1269,777.500', GREEN);
line('824,777 832,775 860,774.500 863,773.500 932,773.500 935,772.500 951,772.500 955,775.500 1260,775.500 1269,776.500', MA20);
line('824,777.500 860,775.500 1131,775.500 1133,774.500 1209,774.500 1211,775.500', MA60);
line('187,776.500 1269,776.500', MA120);

// pane borders
rect(183, 728, 1130, 1, '#808080');
rect(1313, 728, 67, 1, '#c0c0c0');
rect(1313, 76, 1, 720, '#c0c0c0');
rect(1379, 76, 1, 721, '#c0c0c0');
rect(183, 779, 1197, 1, '#c0c0c0');
rect(183, 796, 1197, 1, '#c0c0c0');
rect(1310, 76, 3, 66, RED);
rect(1310, 142, 3, 502, BLUE);

months.forEach(function (m) {
    rect(m[0], 780, 1, 6, '#b0b0b0');
    label(m[0] + 1, 787.5, m[1], '#000', m[2]);
});
label(1323, 788.5, '04/29');

// price axis
for (let i = 0; i < 19; i++) rect(1314, Math.round(109 + i * 32.15), 2, 1, '#b0b0b0');
[[206, '5,000'], [367, '4,500'], [527, '4,000'], [688, '3,500']].forEach(function (t) {
    rect(1314, t[0], 4, 1, '#b0b0b0');
    label(1324, t[0] - 0.5, t[1]);
});
label(1324, 747.5, '2,500K');
label(1348, 772, '0K');
[748, 754, 760, 766, 771, 777].forEach(function (y) { rect(1314, y, 3, 1, '#b0b0b0'); });
add('path', { d: 'M1313 141.500l6-6v12z', fill: '#0a8c0a' });
rect(1321, 133, 44, 28, '#0a8c0a');
label(1322, 140.5, '5,200', '#fff');
label(1322, 154, '(0.00%)', '#fff');

// pane buttons
function paneButton(x, y, mark) {
    add('rect', { x: x + 0.5, y: y + 0.5, width: 9, height: 9, fill: '#efefef', stroke: '#000' });
    if (mark === 'box') add('rect', { x: x + 2.5, y: y + 2.5, width: 5, height: 5, fill: 'none', stroke: '#000' });
    else if (mark === 'x') add('path', { class: 'stroke', d: `M${x + 2} ${y + 2}l6 6M${x + 8} ${y + 2}l-6 6`, stroke: '#000' });
    else add('text', { x: x + 5, y: y + 8, class: 'mark', 'text-anchor': 'middle', style: 'font-size:8px' }, mark);
}
paneButton(1314, 75, 'L');
paneButton(1323, 75, 'I');
paneButton(1332, 75, 'R');
paneButton(1369, 75, 'box');
paneButton(1314, 728, 'L');
paneButton(1323, 728, 'I');
paneButton(1360, 728, 'box');
paneButton(1369, 728, 'x');

// legends: marker x, text x, text, color
const legend = [
    [189, 195, '대기매물', '#000'], [249, 255, '신영스팩7호', '#000', true], [333, 339, '가격이평', GREEN],
    [0, 393, '5', GREEN], [405, 411, '10', MA10], [429, 435, '20', MA20], [453, 459, '60', MA60],
    [477, 483, '120', MA120], [507, 513, '240', MA240]
];
const volLegend = [
    [189, 195, '거래량', '#000'], [237, 243, '거래이평', GREEN], [0, 297, '5', GREEN],
    [309, 315, '20', MA20], [333, 339, '60', MA60], [357, 363, '120', MA120]
];
function drawLegend(list, cy) {
    list.forEach(function (l) {
        if (l[0]) rect(l[0], cy - 3, 3, 7, l[3]);
        label(l[1], cy, l[2], l[3], l[4]);
    });
}
drawLegend(legend, 85);
drawLegend(volLegend, 738);
```
